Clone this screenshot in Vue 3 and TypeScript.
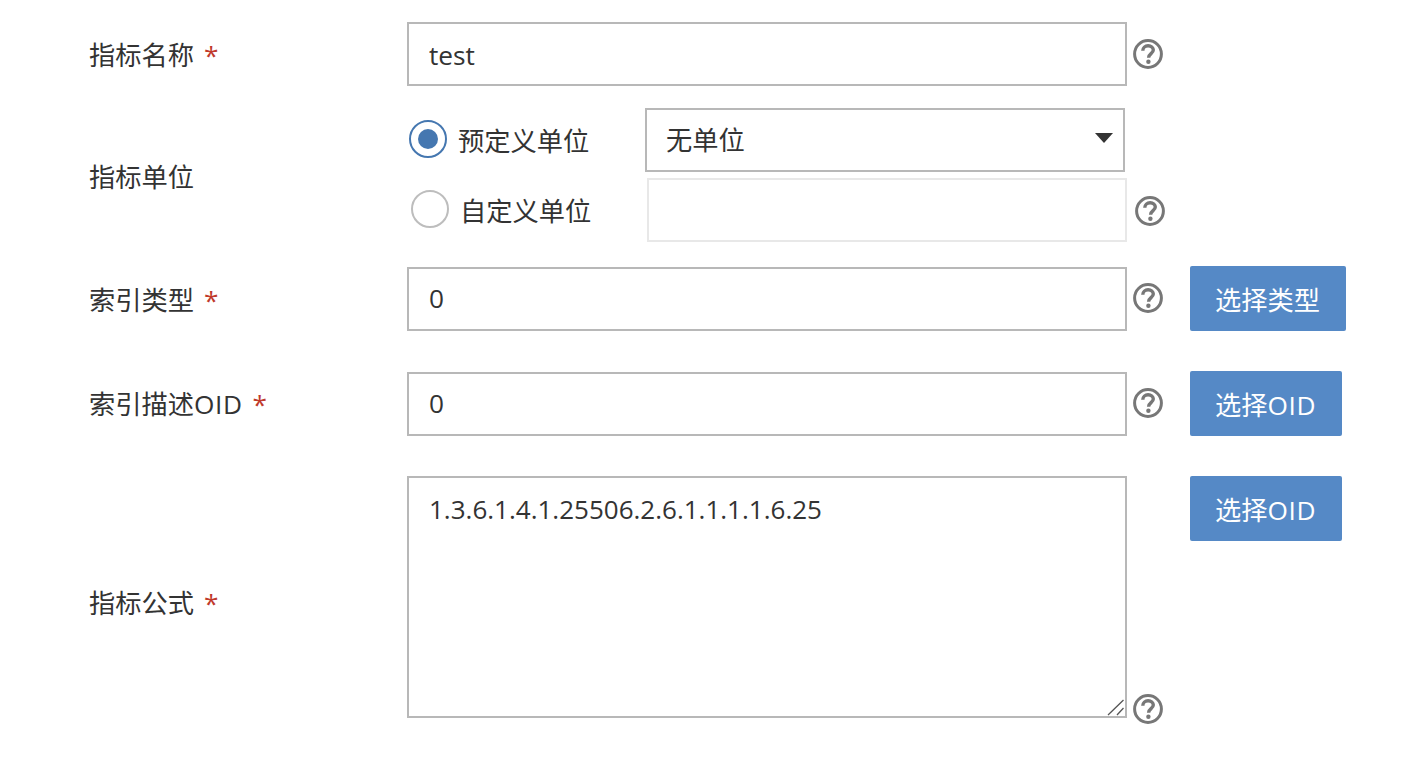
<template>
  <form class="metric-form" @submit.prevent>
    <div class="form-row name-row">
      <label class="field-label">指标名称<span class="req">*</span></label>
      <input v-model="name" class="text-input" type="text" />
      <HelpIcon />
    </div>

    <div class="form-row unit-row">
      <label class="field-label unit-label">指标单位</label>
      <div class="unit-options">
        <div class="unit-option">
          <span class="radio checked"></span>
          <span class="radio-text">预定义单位</span>
          <div class="select-wrap">
            <select v-model="unit" class="unit-select">
              <option>无单位</option>
            </select>
            <span class="caret"></span>
          </div>
        </div>
        <div class="unit-option custom">
          <span class="radio"></span>
          <span class="radio-text">自定义单位</span>
          <input class="text-input custom-input" type="text" disabled />
          <HelpIcon />
        </div>
      </div>
    </div>

    <div class="form-row type-row">
      <label class="field-label">索引类型<span class="req">*</span></label>
      <input v-model="indexType" class="text-input num-input" type="text" />
      <HelpIcon class="lift-help" />
      <button class="pick-btn wide" type="button">选择类型</button>
    </div>

    <div class="form-row oid-row">
      <label class="field-label oid-label">索引描述<span class="latin">OID</span><span class="req">*</span></label>
      <input v-model="indexOid" class="text-input num-input" type="text" />
      <HelpIcon class="lift-help" />
      <button class="pick-btn" type="button">选择<span class="latin">OID</span></button>
    </div>

    <div class="form-row formula-row">
      <label class="field-label formula-label">指标公式<span class="req">*</span></label>
      <div class="area-wrap">
        <textarea v-model="formula" class="text-area"></textarea>
        <svg class="grip" viewBox="0 0 18 17" width="18" height="17">
          <path d="M1 16 16.5 1M10 16 16.5 9" fill="none" stroke="#555" stroke-width="1.3" />
        </svg>
      </div>
      <HelpIcon class="bottom-help" />
      <button class="pick-btn top-btn" type="button">选择<span class="latin">OID</span></button>
    </div>
  </form>
</template>

<script setup lang="ts">
import { h, ref } from 'vue'

const name = ref('test')
const unit = ref('无单位')
const indexType = ref('0')
const indexOid = ref('0')
const formula = ref('1.3.6.1.4.1.25506.2.6.1.1.1.1.6.25')

const HelpIcon = () =>
  h('svg', { class: 'help-icon', viewBox: '0 0 30 30', width: 30, height: 30 }, [
    h('circle', { cx: 15, cy: 15, r: 13.4, fill: 'none', stroke: '#777', 'stroke-width': 3 }),
    h('path', {
      d: 'M9.8 11.8c0-3.1 2.3-5 5.3-5s5.2 1.8 5.2 4.3c0 3.5-4.7 3.7-4.7 7.6',
      fill: 'none',
      stroke: '#777',
      'stroke-width': 3.4,
    }),
    h('circle', { cx: 15.4, cy: 22.8, r: 2.2, fill: '#777' }),
  ])
</script>

<style scoped>
.metric-form { width: 1414px; height: 778px; box-sizing: border-box; padding: 22px 0 0 89px; background: #fff; font-family: "Open Sans", "Noto Sans CJK SC", sans-serif; font-size: 26.25px; color: #333; }
.form-row { display: flex; align-items: center; }
.field-label { width: 318px; flex: none; color: #333; }
.unit-label { padding-top: 2px; }
.formula-label { padding-top: 9px; }
.oid-label { padding-bottom: 2px; }
.latin { letter-spacing: 0.6px; }
.req { color: #c0392b; margin-left: 10px; }
.text-input { width: 720px; height: 64px; flex: none; box-sizing: border-box; border: 2px solid #b8b8b8; padding: 1px 20px 0; font: inherit; color: #333; background: #fff; outline: none; }
.num-input { padding-top: 0; padding-bottom: 1px; }
.help-icon { flex: none; margin-left: 6px; }
.lift-help { margin-bottom: 2px; }
.unit-row { margin-top: 22px; }
.unit-options { display: flex; flex-direction: column; gap: 6px; padding-left: 2px; }
.unit-option { display: flex; align-items: center; height: 64px; }
.unit-option.custom { padding-left: 2px; }
.radio { width: 38px; height: 38px; flex: none; box-sizing: border-box; border: 2px solid #bdbdbd; border-radius: 50%; background: #fff; margin-top: -3px; }
.radio.checked { border-color: #4577b0; position: relative; }
.radio.checked::after { content: ""; position: absolute; left: 7px; top: 7px; width: 20px; height: 20px; border-radius: 50%; background: #4577b0; }
.radio-text { width: 187px; flex: none; margin-left: 11px; }
.select-wrap { position: relative; width: 480px; height: 64px; }
.unit-select { width: 100%; height: 100%; box-sizing: border-box; border: 2px solid #b8b8b8; border-radius: 0; padding: 0 19px; font: inherit; color: #333; background: #fff; appearance: none; outline: none; }
.caret { position: absolute; right: 12px; top: 25px; width: 0; height: 0; border-left: 9.5px solid transparent; border-right: 9.5px solid transparent; border-top: 10px solid #333; }
.custom-input { width: 480px; border-color: #e8e8e8; }
.custom-input + .help-icon { margin-left: 8px; margin-top: 1px; }
.type-row { margin-top: 24px; }
.oid-row { margin-top: 40px; }
.formula-row { margin-top: 40px; align-items: flex-start; }
.formula-row .field-label { align-self: center; }
.area-wrap { position: relative; width: 720px; height: 242px; flex: none; }
.text-area { width: 100%; height: 100%; box-sizing: border-box; border: 2px solid #b8b8b8; padding: 13px 20px; font: inherit; font-size: 26px; color: #333; background: #fff; outline: none; display: block; resize: none; }
.grip { position: absolute; right: 2px; bottom: 2px; }
.bottom-help { align-self: flex-end; margin-bottom: -6px; }
.pick-btn { width: 152px; height: 65px; flex: none; margin-left: 27px; border: none; border-radius: 2px; background: #5589c6; color: #fff; font: inherit; padding: 0 1px 0 0; }
.pick-btn.wide { width: 156px; }
.top-btn { align-self: flex-start; }
</style>

<style>
html, body { margin: 0; background: #fff; }
</style>
